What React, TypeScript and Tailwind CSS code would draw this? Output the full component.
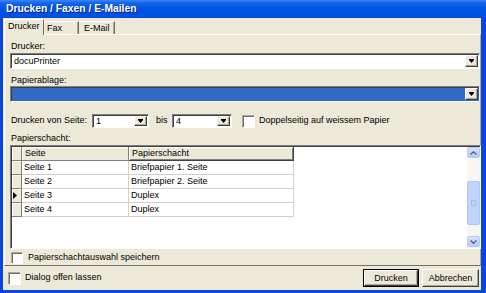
import React from "react";

const font = "font-['Liberation_Sans',Arial,sans-serif]";

function DropBtn() {
  return (
    <div className="w-[13px] h-full bg-[#ECE9D8] border border-t-white border-l-white border-r-[#404040] border-b-[#404040] shadow-[inset_-1px_-1px_0_#ACA899] flex items-center justify-center">
      <svg width="5" height="4" viewBox="0 0 5 4">
        <path d="M0 0H5V1H0Z M0 1H5L2.5 4Z" fill="#000" />
      </svg>
    </div>
  );
}

function Combo({ value, w, selected, h }: { value: string; w: string; selected?: boolean; h: string }) {
  return (
    <div className={`${w} ${h} flex border border-t-[#808080] border-l-[#808080] border-r-white border-b-white shadow-[inset_1px_1px_0_#404040] ${selected ? "bg-[#316AC5]" : "bg-white"} p-[1px] pl-[2px]`}>
      <div className="flex-1 flex items-center leading-none pl-[1px]">{value}</div>
      <DropBtn />
    </div>
  );
}

function Check({ size }: { size: string }) {
  return (
    <div className={`${size} shrink-0 bg-white border border-t-[#ACA899] border-l-[#ACA899] border-r-white border-b-white shadow-[inset_1px_1px_0_#716F64]`} />
  );
}

function HeadCell({ w, children, last }: { w: string; children?: React.ReactNode; last?: boolean }) {
  return (
    <div
      className={`${w} h-full shrink-0 bg-[#ECE9D8] border-r border-b ${last ? "border-r-[#404040] border-b-[#404040] shadow-[inset_1px_1px_0_#fff,inset_-1px_-1px_0_#808080]" : "border-r-[#808080] border-b-[#808080] shadow-[inset_1px_1px_0_#fff]"} flex items-center pl-[3px] leading-none`}
    >
      {children}
    </div>
  );
}

function Row({ a, b, current }: { a: string; b: string; current?: boolean }) {
  return (
    <div className="h-[14px] flex">
      <div className="w-[10px] h-full shrink-0 bg-[#ECE9D8] border-r border-b border-r-[#808080] border-b-[#808080] shadow-[inset_1px_1px_0_#fff] flex items-center justify-start pl-[1px]">
        {current && (
          <svg width="4" height="7" viewBox="0 0 4 7">
            <path d="M0 0L4 3.5L0 7Z" fill="#000" />
          </svg>
        )}
      </div>
      <div className="w-[107px] h-full shrink-0 bg-white border-r border-b border-[#D4D0C8] flex items-center pl-[2px] leading-none">{a}</div>
      <div className="w-[165px] h-full shrink-0 bg-white border-r border-b border-[#D4D0C8] flex items-center pl-[2px] leading-none">{b}</div>
    </div>
  );
}

function ScrollBtn({ up }: { up?: boolean }) {
  return (
    <div className="h-[11px] w-full rounded-[2px] bg-gradient-to-b from-[#D6E2FC] to-[#B6CAF6] border border-[#B8CBF5] flex items-center justify-center">
      <svg width="7" height="4" viewBox="0 0 7 4">
        <path d={up ? "M0.5 3.5L3.5 0.8L6.5 3.5" : "M0.5 0.5L3.5 3.2L6.5 0.5"} stroke="#4D6185" strokeWidth="1.3" fill="none" />
      </svg>
    </div>
  );
}

function Button({ label, def }: { label: string; def?: boolean }) {
  return (
    <div className={`h-[18px] ${def ? "w-[56px] border border-[#000]" : "w-[57px]"} flex`}>
      <div className="flex-1 bg-[#ECE9D8] border border-t-white border-l-white border-r-[#404040] border-b-[#404040] shadow-[inset_-1px_-1px_0_#ACA899] flex items-center justify-center leading-none">
        {label}
      </div>
    </div>
  );
}

export default function App() {
  return (
    <div className={`w-[486px] h-[293px] flex flex-col bg-[#0A46DC] ${font} text-[9px] text-black overflow-hidden`}>
      <div className="h-[18px] shrink-0 bg-[linear-gradient(to_bottom,#3D86F2_0px,#1464EC_3px,#0055E5_8px,#0050DE_18px)] flex items-center pl-[6px]">
        <span className="text-white font-bold text-[10.3px] leading-none [text-shadow:1px_1px_0_#0A1F80]">Drucken / Faxen / E-Mailen</span>
      </div>
      <div className="flex-1 flex flex-col pl-[3px] pr-[5px] pb-[3px]">
        <div className="flex-1 flex flex-col bg-[#ECE9D8]">
          {/* tabs */}
          <div className="h-[16px] shrink-0 flex items-end pl-[1px]">
            <div className="relative z-10 w-[40px] h-[16px] mb-[-1px] bg-[#ECE9D8] border-l border-t border-r border-l-white border-t-white border-r-[#716F64] flex items-start pt-[2px] pl-[3px] leading-none">
              Drucker
            </div>
            <div className="w-[35px] h-[13px] bg-[#ECE9D8] border-t border-r border-t-white border-r-[#716F64] shadow-[inset_-1px_0_0_#ACA899] flex items-start pt-[2px] pl-[3px] leading-none">
              Fax
            </div>
            <div className="w-[36px] h-[13px] bg-[#ECE9D8] border-t border-r border-t-white border-r-[#716F64] shadow-[inset_-1px_0_0_#ACA899] flex items-start pt-[2px] pl-[5px] leading-none">
              E-Mail
            </div>
          </div>
          {/* panel */}
          <div className="h-[232px] shrink-0 ml-[1px] border border-t-white border-l-white border-r-[#ACA899] border-b-[#716F64] flex flex-col pl-[5px] pr-0 pt-[6px]">
            <div className="h-[12px] leading-[11px] pl-[1px]">Drucker:</div>
            <Combo value="docuPrinter" w="w-[470px]" h="h-[16px]" />
            <div className="h-[11px] mt-[6px] leading-[11px] pl-[1px]">Papierablage:</div>
            <Combo value="" w="w-[470px]" h="h-[16px]" selected />
            <div className="h-[14px] mt-[12px] flex items-center">
              <div className="w-[82px] pl-[1px]">Drucken von Seite:</div>
              <Combo value="1" w="w-[57px]" h="h-[14px]" />
              <div className="w-[23px] pl-[7px]">bis</div>
              <Combo value="4" w="w-[60px]" h="h-[14px]" />
              <div className="w-[10px]" />
              <Check size="w-[13px] h-[13px]" />
              <div className="pl-[4px]">Doppelseitig auf weissem Papier</div>
            </div>
            <div className="h-[11px] mt-[5px] leading-[11px] pl-[1px]">Papierschacht:</div>
            <div className="mt-[1px] w-[471px] h-[104px] bg-white border border-t-[#808080] border-l-[#808080] border-r-white border-b-white shadow-[inset_1px_1px_0_#404040] flex pl-[1px] pt-[1px]">
              <div className="flex-1 flex flex-col">
                <div className="h-[14px] flex">
                  <HeadCell w="w-[10px]" />
                  <HeadCell w="w-[107px]">Seite</HeadCell>
                  <HeadCell w="w-[165px]" last>
                    Papierschacht
                  </HeadCell>
                </div>
                <Row a="Seite 1" b="Briefpapier 1. Seite" />
                <Row a="Seite 2" b="Briefpapier 2. Seite" />
                <Row a="Seite 3" b="Duplex" current />
                <Row a="Seite 4" b="Duplex" />
              </div>
              <div className="w-[13px] h-full bg-[#F7F6F2] flex flex-col pb-[1px]">
                <ScrollBtn up />
                <div className="h-[23px]" />
                <div className="h-[44px] mx-[0px] rounded-[2px] bg-[#C3D4FB] border border-[#B1C7F6] flex items-center justify-center">
                  <div className="w-[5px] h-[6px] border border-[#A7BCF0]" />
                </div>
                <div className="flex-1" />
                <ScrollBtn />
              </div>
            </div>
            <div className="mt-[2px] flex items-center h-[13px]">
              <Check size="w-[12px] h-[12px] ml-[1px]" />
              <div className="pl-[5px]">Papierschachtauswahl speichern</div>
            </div>
          </div>
          {/* bottom */}
          <div className="flex-1 flex items-center pl-[5px] pr-[2px]">
            <Check size="w-[13px] h-[13px]" />
            <div className="pl-[4px]">Dialog offen lassen</div>
            <div className="flex-1" />
            <Button label="Drucken" def />
            <div className="w-[3px]" />
            <Button label="Abbrechen" />
          </div>
        </div>
      </div>
    </div>
  );
}
